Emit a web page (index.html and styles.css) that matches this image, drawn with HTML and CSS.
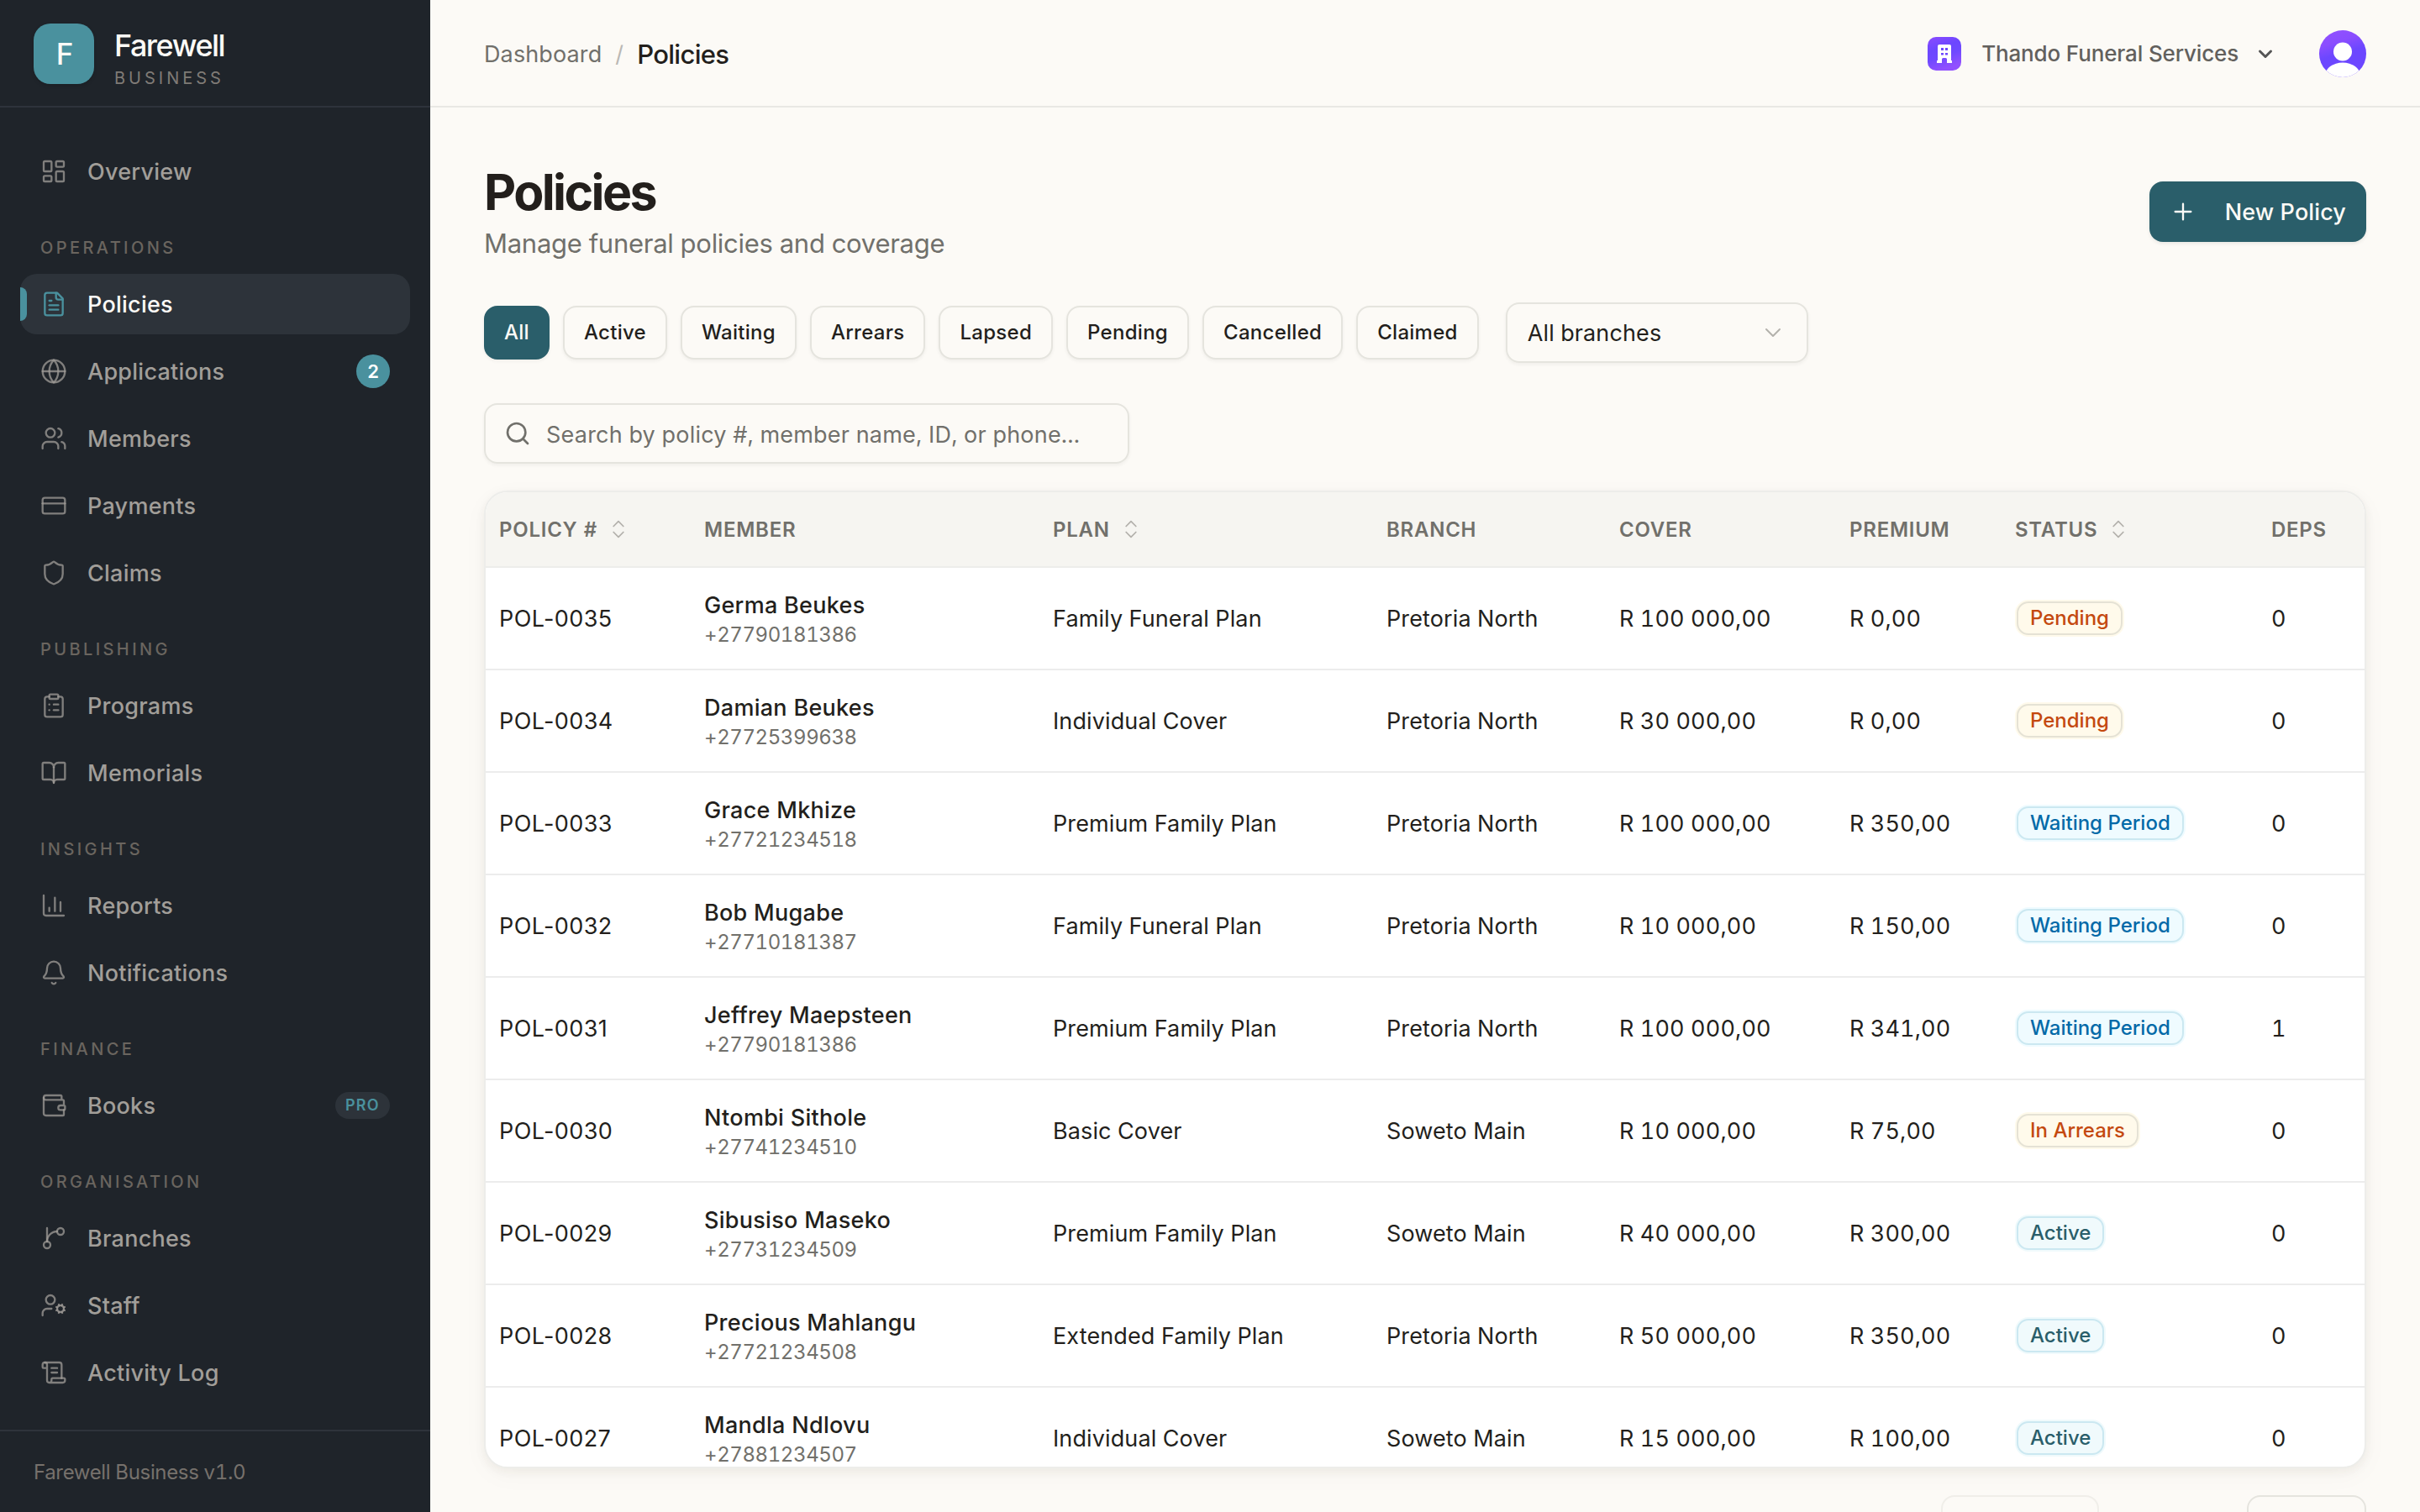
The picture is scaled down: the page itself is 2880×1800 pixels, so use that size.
FILE: index.html
```html
<!DOCTYPE html>
<html lang="en">
<head>
<meta charset="utf-8">
<title>Policies</title>
<link rel="stylesheet" href="styles.css">
</head>
<body>
<div class="app">
  <aside class="sidebar">
    <div class="brand">
      <div class="brand-mark">F</div>
      <div class="brand-text"><span class="brand-name">Farewell</span><span class="brand-sub">BUSINESS</span></div>
    </div>
    <nav class="nav">
      <div class="group">
        <a class="item"><svg class="icon" viewBox="0 0 24 24"><rect width="7" height="9" x="3" y="3" rx="1"/><rect width="7" height="5" x="14" y="3" rx="1"/><rect width="7" height="9" x="14" y="12" rx="1"/><rect width="7" height="5" x="3" y="16" rx="1"/></svg>Overview</a>
      </div>
      <div class="label">OPERATIONS</div>
      <div class="group">
        <a class="item active"><svg class="icon" viewBox="0 0 24 24"><path d="M15 2H6a2 2 0 0 0-2 2v16a2 2 0 0 0 2 2h12a2 2 0 0 0 2-2V7Z"/><path d="M14 2v4a2 2 0 0 0 2 2h4"/><path d="M10 9H8"/><path d="M16 13H8"/><path d="M16 17H8"/></svg>Policies</a>
        <a class="item"><svg class="icon" viewBox="0 0 24 24"><circle cx="12" cy="12" r="10"/><path d="M12 2a14.5 14.5 0 0 0 0 20 14.5 14.5 0 0 0 0-20"/><path d="M2 12h20"/></svg>Applications<span class="count">2</span></a>
        <a class="item"><svg class="icon" viewBox="0 0 24 24"><path d="M16 21v-2a4 4 0 0 0-4-4H6a4 4 0 0 0-4 4v2"/><circle cx="9" cy="7" r="4"/><path d="M22 21v-2a4 4 0 0 0-3-3.87"/><path d="M16 3.13a4 4 0 0 1 0 7.75"/></svg>Members</a>
        <a class="item"><svg class="icon" viewBox="0 0 24 24"><rect width="20" height="14" x="2" y="5" rx="2"/><path d="M2 10h20"/></svg>Payments</a>
        <a class="item"><svg class="icon" viewBox="0 0 24 24"><path d="M20 13c0 5-3.5 7.5-7.66 8.95a1 1 0 0 1-.67-.01C7.5 20.5 4 18 4 13V6a1 1 0 0 1 1-1c2 0 4.5-1.2 6.24-2.72a1.17 1.17 0 0 1 1.52 0C14.51 3.81 17 5 19 5a1 1 0 0 1 1 1z"/></svg>Claims</a>
      </div>
      <div class="label">PUBLISHING</div>
      <div class="group">
        <a class="item"><svg class="icon" viewBox="0 0 24 24"><rect width="8" height="4" x="8" y="2" rx="1"/><path d="M16 4h2a2 2 0 0 1 2 2v14a2 2 0 0 1-2 2H6a2 2 0 0 1-2-2V6a2 2 0 0 1 2-2h2"/><path d="M12 11h4"/><path d="M12 16h4"/><path d="M8 11h.01"/><path d="M8 16h.01"/></svg>Programs</a>
        <a class="item"><svg class="icon" viewBox="0 0 24 24"><path d="M12 7v14"/><path d="M3 18a1 1 0 0 1-1-1V4a1 1 0 0 1 1-1h5a4 4 0 0 1 4 4 4 4 0 0 1 4-4h5a1 1 0 0 1 1 1v13a1 1 0 0 1-1 1h-6a3 3 0 0 0-3 3 3 3 0 0 0-3-3z"/></svg>Memorials</a>
      </div>
      <div class="label">INSIGHTS</div>
      <div class="group">
        <a class="item"><svg class="icon" viewBox="0 0 24 24"><path d="M3 3v16a2 2 0 0 0 2 2h16"/><path d="M18 17V9"/><path d="M13 17V5"/><path d="M8 17v-3"/></svg>Reports</a>
        <a class="item"><svg class="icon" viewBox="0 0 24 24"><path d="M10.268 21a2 2 0 0 0 3.464 0"/><path d="M3.262 15.326A1 1 0 0 0 4 17h16a1 1 0 0 0 .74-1.673C19.41 13.956 18 12.499 18 8A6 6 0 0 0 6 8c0 4.499-1.411 5.956-2.738 7.326"/></svg>Notifications</a>
      </div>
      <div class="label">FINANCE</div>
      <div class="group">
        <a class="item"><svg class="icon" viewBox="0 0 24 24"><path d="M19 7V4a1 1 0 0 0-1-1H5a2 2 0 0 0 0 4h15a1 1 0 0 1 1 1v4h-3a2 2 0 0 0 0 4h3a1 1 0 0 0 1-1v-2a1 1 0 0 0-1-1"/><path d="M3 5v14a2 2 0 0 0 2 2h15a1 1 0 0 0 1-1v-4"/></svg>Books<span class="pro">PRO</span></a>
      </div>
      <div class="label">ORGANISATION</div>
      <div class="group">
        <a class="item"><svg class="icon" viewBox="0 0 24 24"><path d="M6 3v12"/><circle cx="18" cy="6" r="3"/><circle cx="6" cy="18" r="3"/><path d="M15 6a9 9 0 0 0-9 9"/></svg>Branches</a>
        <a class="item"><svg class="icon" viewBox="0 0 24 24"><path d="M10 15H6a4 4 0 0 0-4 4v2"/><path d="m14.305 16.53.923-.382"/><path d="m15.228 13.852-.923-.383"/><path d="m16.852 12.228-.383-.923"/><path d="m16.852 17.772-.383.924"/><path d="m19.148 12.228.383-.923"/><path d="m19.53 18.696-.382-.924"/><path d="m20.772 13.852.924-.383"/><path d="m20.772 16.148.924.383"/><circle cx="18" cy="15" r="3"/><circle cx="9" cy="7" r="4"/></svg>Staff</a>
        <a class="item"><svg class="icon" viewBox="0 0 24 24"><path d="M15 12h-5"/><path d="M15 8h-5"/><path d="M19 17V5a2 2 0 0 0-2-2H4"/><path d="M8 21h12a2 2 0 0 0 2-2v-1a1 1 0 0 0-1-1H11a1 1 0 0 0-1 1v1a2 2 0 1 1-4 0V5a2 2 0 1 0-4 0v2a1 1 0 0 0 1 1h3"/></svg>Activity Log</a>
      </div>
    </nav>
    <div class="version">Farewell Business v1.0</div>
  </aside>

  <div class="main">
    <header class="topbar">
      <div class="crumbs"><span class="crumb">Dashboard</span><span class="slash">/</span><span class="crumb-current">Policies</span></div>
      <div class="account">
        <svg class="org-logo" viewBox="0 0 40 40"><defs><linearGradient id="og" x1="0" y1="0" x2="0.35" y2="1"><stop offset="0" stop-color="#8b4bff"/><stop offset="0.4" stop-color="#6c47ff"/><stop offset="0.65" stop-color="#6f49ff"/><stop offset="1" stop-color="#9150ff"/></linearGradient></defs><rect width="40" height="40" rx="10" fill="url(#og)"/><path fill="#fff" fill-rule="evenodd" d="M14 9h12a2 2 0 0 1 2 2v17h1v3h-6v-4.5a1.5 1.5 0 0 0-1.5-1.5h-3a1.5 1.5 0 0 0-1.5 1.5V31h-6v-3h1V11a2 2 0 0 1 2-2zM16 13v3h3v-3zM21 13v3h3v-3zM16 19v2.5h3V19zM21 19v2.5h3V19z"/></svg>
        <span class="org-name">Thando Funeral Services</span>
        <svg class="org-caret" viewBox="0 0 24 24"><path d="m5.5 9 6.5 6.5L18.5 9"/></svg>
        <svg class="avatar" viewBox="0 0 56 56"><defs><linearGradient id="ag" x1="0.3" y1="0" x2="0.6" y2="1"><stop offset="0" stop-color="#9150ff"/><stop offset="0.25" stop-color="#8a4dff"/><stop offset="0.5" stop-color="#6c47ff"/></linearGradient><clipPath id="ac"><circle cx="28" cy="28" r="28"/></clipPath></defs><g clip-path="url(#ac)"><rect width="56" height="56" fill="url(#ag)"/><circle cx="28" cy="25.5" r="11" fill="#fff"/><ellipse cx="28" cy="54" rx="21" ry="15.5" fill="#fff"/></g></svg>
      </div>
    </header>

    <main class="content">
      <div class="heading">
        <div><h1 class="title">Policies</h1><p class="subtitle">Manage funeral policies and coverage</p></div>
        <button class="primary"><svg class="plus" viewBox="0 0 24 24"><path d="M5 12h14M12 5v14"/></svg>New Policy</button>
      </div>
      <div class="filters">
        <button class="chip on">All</button><button class="chip">Active</button><button class="chip">Waiting</button><button class="chip">Arrears</button><button class="chip">Lapsed</button><button class="chip">Pending</button><button class="chip">Cancelled</button><button class="chip">Claimed</button>
        <div class="select">All branches<svg class="caret" viewBox="0 0 24 24"><path d="m6 9 6 6 6-6"/></svg></div>
      </div>
      <div class="search"><svg class="search-icon" viewBox="0 0 24 24"><circle cx="11" cy="11" r="8"/><path d="m21 21-4.3-4.3"/></svg><span>Search by policy #, member name, ID, or phone...</span></div>

      <div class="card">
        <div class="row head">
          <div class="cell">POLICY #<svg class="sort" viewBox="0 0 24 24"><path d="m7 15 5 5 5-5"/><path d="m7 9 5-5 5 5"/></svg></div><div class="cell">MEMBER</div><div class="cell">PLAN<svg class="sort" viewBox="0 0 24 24"><path d="m7 15 5 5 5-5"/><path d="m7 9 5-5 5 5"/></svg></div><div class="cell">BRANCH</div><div class="cell">COVER</div><div class="cell">PREMIUM</div><div class="cell">STATUS<svg class="sort" viewBox="0 0 24 24"><path d="m7 15 5 5 5-5"/><path d="m7 9 5-5 5 5"/></svg></div><div class="cell">DEPS</div>
        </div>
        <div class="row"><div class="cell number">POL-0035</div><div class="cell member"><b>Germa Beukes</b><small>+27790181386</small></div><div class="cell">Family Funeral Plan</div><div class="cell">Pretoria North</div><div class="cell">R 100 000,00</div><div class="cell">R 0,00</div><div class="cell"><span class="badge warn">Pending</span></div><div class="cell">0</div></div>
        <div class="row"><div class="cell number">POL-0034</div><div class="cell member"><b>Damian Beukes</b><small>+27725399638</small></div><div class="cell">Individual Cover</div><div class="cell">Pretoria North</div><div class="cell">R 30 000,00</div><div class="cell">R 0,00</div><div class="cell"><span class="badge warn">Pending</span></div><div class="cell">0</div></div>
        <div class="row"><div class="cell number">POL-0033</div><div class="cell member"><b>Grace Mkhize</b><small>+27721234518</small></div><div class="cell">Premium Family Plan</div><div class="cell">Pretoria North</div><div class="cell">R 100 000,00</div><div class="cell">R 350,00</div><div class="cell"><span class="badge info">Waiting Period</span></div><div class="cell">0</div></div>
        <div class="row"><div class="cell number">POL-0032</div><div class="cell member"><b>Bob Mugabe</b><small>+27710181387</small></div><div class="cell">Family Funeral Plan</div><div class="cell">Pretoria North</div><div class="cell">R 10 000,00</div><div class="cell">R 150,00</div><div class="cell"><span class="badge info">Waiting Period</span></div><div class="cell">0</div></div>
        <div class="row"><div class="cell number">POL-0031</div><div class="cell member"><b>Jeffrey Maepsteen</b><small>+27790181386</small></div><div class="cell">Premium Family Plan</div><div class="cell">Pretoria North</div><div class="cell">R 100 000,00</div><div class="cell">R 341,00</div><div class="cell"><span class="badge info">Waiting Period</span></div><div class="cell">1</div></div>
        <div class="row"><div class="cell number">POL-0030</div><div class="cell member"><b>Ntombi Sithole</b><small>+27741234510</small></div><div class="cell">Basic Cover</div><div class="cell">Soweto Main</div><div class="cell">R 10 000,00</div><div class="cell">R 75,00</div><div class="cell"><span class="badge warn">In Arrears</span></div><div class="cell">0</div></div>
        <div class="row"><div class="cell number">POL-0029</div><div class="cell member"><b>Sibusiso Maseko</b><small>+27731234509</small></div><div class="cell">Premium Family Plan</div><div class="cell">Soweto Main</div><div class="cell">R 40 000,00</div><div class="cell">R 300,00</div><div class="cell"><span class="badge ok">Active</span></div><div class="cell">0</div></div>
        <div class="row"><div class="cell number">POL-0028</div><div class="cell member"><b>Precious Mahlangu</b><small>+27721234508</small></div><div class="cell">Extended Family Plan</div><div class="cell">Pretoria North</div><div class="cell">R 50 000,00</div><div class="cell">R 350,00</div><div class="cell"><span class="badge ok">Active</span></div><div class="cell">0</div></div>
        <div class="row"><div class="cell number">POL-0027</div><div class="cell member"><b>Mandla Ndlovu</b><small>+27881234507</small></div><div class="cell">Individual Cover</div><div class="cell">Soweto Main</div><div class="cell">R 15 000,00</div><div class="cell">R 100,00</div><div class="cell"><span class="badge ok">Active</span></div><div class="cell">0</div></div>
      </div>
      <div class="pager"><button class="page-btn prev"></button><button class="page-btn next"></button></div>
    </main>
  </div>
</div>
</body>
</html>
```
FILE: styles.css
```css
* { box-sizing: border-box; }
body { margin: 0; background: #fcfaf6; color: #231f1c; font-family: Inter, "Liberation Sans", sans-serif; font-size: 27px; letter-spacing: .12px; font-variant-numeric: tabular-nums; }
button { font: inherit; color: inherit; letter-spacing: inherit; margin: 0; }
svg { fill: none; stroke-linecap: round; stroke-linejoin: round; flex: none; }

.app { display: flex; width: 2880px; height: 1800px; overflow: hidden; }

.sidebar { width: 512px; flex: none; display: flex; flex-direction: column; background: #1f242a; }
.brand { height: 128px; flex: none; display: flex; align-items: center; gap: 24px; padding: 2px 40px 0; border-bottom: 2px solid #2e333b; }
.brand-mark { width: 72px; height: 72px; padding-left: 2px; border-radius: 20px; background: #4a919e; color: #fcfaf6; display: flex; align-items: center; justify-content: center; font-size: 35px; font-weight: 500; box-shadow: 0 2px 4px rgba(0,0,0,.15); }
.brand-text { display: flex; flex-direction: column; padding-top: 9px; }
.brand-name { font-size: 36px; line-height: 48px; font-weight: 500; letter-spacing: -1.5px; color: #fcfaf6; }
.brand-sub { font-size: 20px; line-height: 30px; letter-spacing: 4px; color: #7f7b76; }

.nav { flex: 1; padding: 40px 24px 0; }
.group { display: flex; flex-direction: column; gap: 8px; }
.label { margin: 40px 24px 16px; font-size: 20px; line-height: 31px; height: 30px; font-weight: 500; letter-spacing: 3.4px; color: #6a655f; }
.item { position: relative; height: 72px; padding: 0 24px; display: flex; align-items: center; gap: 24px; border-radius: 20px; font-weight: 500; letter-spacing: .25px; color: #a19e99; }
.icon { width: 32px; height: 32px; stroke: rgba(161,158,153,.75); stroke-width: 1.75; }
.item.active { background: #2d333a; color: #fcfaf6; }
.item.active .icon { stroke: #4a919e; }
.item.active::before { content: ""; position: absolute; left: 0; top: 16px; width: 8px; height: 40px; border-radius: 0 8px 8px 0; background: #4a919e; }
.count { margin-left: auto; width: 40px; height: 40px; border-radius: 20px; background: #4a919e; color: #fff; display: flex; align-items: center; justify-content: center; font-size: 22px; font-weight: 600; letter-spacing: 0; }
.pro { margin-left: auto; height: 32px; padding: 0 12px; border-radius: 16px; background: #2d333a; color: #4a919e; font-size: 18px; line-height: 32px; font-weight: 600; letter-spacing: 1.3px; }
.version { height: 98px; flex: none; border-top: 2px solid #2e333b; padding: 0 40px; line-height: 97px; font-size: 24px; letter-spacing: -.35px; color: #76716c; }

.main { flex: 1; min-width: 0; display: flex; flex-direction: column; }
.topbar { height: 128px; flex: none; display: flex; align-items: center; justify-content: space-between; padding: 0 64px; border-bottom: 2px solid #e9e8e4; }
.crumbs { display: flex; align-items: center; gap: 16px; padding-top: 3px; }
.crumb { color: #71706b; }
.slash { color: #bab8b4; }
.crumb-current { font-size: 31px; font-weight: 500; letter-spacing: -.7px; }
.account { display: flex; align-items: center; padding-top: 1px; }
.org-logo { width: 40px; height: 40px; }
.org-name { margin-left: 24px; font-size: 26px; font-weight: 500; letter-spacing: -.15px; color: #62605d; }
.org-caret { width: 24px; height: 24px; margin-left: 20px; stroke: #555; stroke-width: 3; }
.avatar { width: 56px; height: 56px; margin-left: 52px; }

.content { flex: 1; min-height: 0; display: flex; flex-direction: column; padding: 64px 64px 0; overflow: hidden; }
.heading { height: 120px; flex: none; display: flex; align-items: center; justify-content: space-between; }
.title { margin: 0; font-size: 59px; line-height: 75px; font-weight: 700; letter-spacing: -2.6px; }
.subtitle { margin: 0; font-size: 31px; line-height: 47px; letter-spacing: -.27px; color: #71706b; }
.primary { height: 72px; display: flex; align-items: center; gap: 34px; padding: 0 24px; border: 0; border-radius: 16px; background: #2a5e6a; color: #fcfaf6; font-weight: 500; box-shadow: 0 2px 4px rgba(0,0,0,.08); }
.plus { width: 32px; height: 32px; stroke: currentColor; stroke-width: 1.75; }

.filters { display: flex; align-items: center; gap: 16px; margin-top: 48px; height: 72px; flex: none; }
.chip { height: 64px; padding: 0 23px 1px; border: 2px solid #e5e4de; border-radius: 16px; background: #fcfaf6; font-size: 24px; font-weight: 500; letter-spacing: .28px; box-shadow: 0 2px 4px rgba(0,0,0,.05); }
.chip.on { padding: 0 22px 1px; background: #2a5e6a; border-color: #2a5e6a; color: #fcfaf6; }
.select { width: 360px; height: 72px; margin-left: 16px; padding: 0 24px; display: flex; align-items: center; justify-content: space-between; border: 2px solid #e5e4de; border-radius: 16px; box-shadow: 0 2px 4px rgba(0,0,0,.05); }
.caret { width: 32px; height: 32px; stroke: #b3b1ac; stroke-width: 1.5; }
.search { width: 768px; height: 72px; flex: none; margin-top: 48px; padding: 0 22px; display: flex; align-items: center; gap: 18px; border: 2px solid #e5e4de; border-radius: 16px; color: #71706b; box-shadow: 0 2px 4px rgba(0,0,0,.05); white-space: nowrap; }
.search span { padding-top: 3px; letter-spacing: .22px; }
.search-icon { width: 32px; height: 32px; stroke: #71706b; stroke-width: 2; }

.card { height: 1164px; flex: none; margin-top: 32px; border: 2px solid #ededea; border-radius: 28px; background: #fff; overflow: hidden; box-shadow: 0 4px 12px rgba(60,50,30,.06), 0 8px 32px rgba(60,50,30,.03); }
.row { height: 122px; display: grid; grid-template-columns: 244px 415px 397px 277px 274px 197px 305px 127px; border-bottom: 2px solid #ececec; }
.cell { padding: 1px 16px 0; display: flex; align-items: center; white-space: nowrap; }
.head { height: 90px; background: #f6f5f1; border-color: #ededea; font-size: 24px; font-weight: 600; letter-spacing: .75px; color: #71706b; }
.head .cell { padding-top: 0; }
.sort { width: 28px; height: 28px; margin-left: 11px; stroke: #b3b1ac; stroke-width: 1.5; }
.number { font-variant-numeric: normal; letter-spacing: .4px; }
.member { flex-direction: column; align-items: flex-start; justify-content: center; padding-top: 3px; }
.member b { font-weight: 500; line-height: 36px; letter-spacing: .28px; }
.member small { font-size: 24px; line-height: 34px; letter-spacing: -.42px; color: #71706b; }
.badge { height: 40px; margin: -1px 0 0 2px; padding: 0 14px; border: 2px solid; border-radius: 14px; font-size: 24px; line-height: 36px; font-weight: 500; letter-spacing: 0; }
.warn { background: #fffaeb; border-color: #e5e2d5; color: #c4490f; box-shadow: 0 0 0 2px #fffaeb; }
.info { background: #effbff; border-color: #cbe8f1; color: #036aa8; box-shadow: 0 0 0 2px #effbff; }
.ok { background: #f0fafc; border-color: #cbe8f1; color: #2a5e6a; box-shadow: 0 0 0 2px #f0fafc; }

.pager { display: flex; justify-content: flex-end; gap: 176px; margin-top: 32px; flex: none; }
.page-btn { height: 64px; border: 2px solid #e5e4de; border-radius: 16px; background: #fcfaf6; }
.prev { width: 188px; opacity: .5; }
.next { width: 142px; }
```
